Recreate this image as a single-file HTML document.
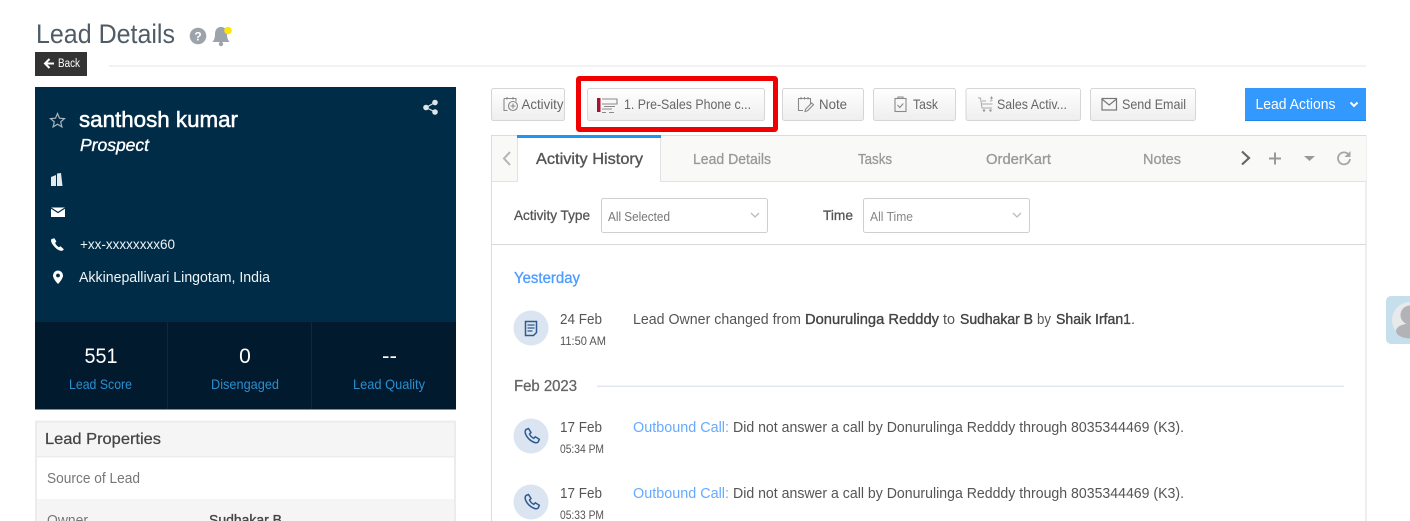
<!DOCTYPE html>
<html lang="en"><head><meta charset="utf-8"><title>Lead Details</title>
<style>
html,body{margin:0;padding:0;background:#fff;width:1410px;height:521px;overflow:hidden}
svg{display:block}
text{font-family:"Liberation Sans",sans-serif;white-space:pre}
.b{font-size:14px;fill:#666}
.tab{font-size:15px;fill:#999;stroke:#999;stroke-width:.3}
.row{font-size:14.5px;fill:#555}
.strong{font-size:14.5px;fill:#444;stroke:#444;stroke-width:.35}
.d{font-size:14.5px;fill:#555}
.t{font-size:11.5px;fill:#555}
.ic{fill:none;stroke:#8a8a8a;stroke-width:1.1}
.lnk{font-size:14.5px;fill:#66aaff}
</style></head><body>
<svg width="1410" height="521" viewBox="0 0 1410 521" xmlns="http://www.w3.org/2000/svg">
<defs><linearGradient id="g" x1="0" y1="0" x2="0" y2="1"><stop offset="0" stop-color="#fff"/><stop offset="1" stop-color="#eeeeee"/></linearGradient></defs>
<rect width="1410" height="521" fill="#fff"/>

<!-- header -->
<text x="36" y="43" font-size="26.500" fill="#4f5b66" textLength="139" lengthAdjust="spacingAndGlyphs">Lead Details</text>
<circle cx="198" cy="36" r="8.300" fill="#9ca3ab"/>
<text x="198" y="40.500" font-size="12" font-weight="bold" fill="#fff" text-anchor="middle">?</text>
<path d="M221 27c-4 0-6 3-6 7 0 4-1 6-2.500 8h17c-1.500-2-2.500-4-2.500-8 0-4-2-7-6-7z" fill="#9ca3ab"/>
<circle cx="221" cy="44" r="2.200" fill="#9ca3ab"/>
<circle cx="228" cy="30.500" r="3.800" fill="#ffe600"/>
<rect x="35" y="52" width="52" height="24" fill="#333"/>
<path d="M54 63.500h-8M49.500 59l-4.500 4.500 4.500 4.500" fill="none" stroke="#fff" stroke-width="2"/>
<text x="58" y="67" font-size="11.500" fill="#fff" textLength="22" lengthAdjust="spacingAndGlyphs">Back</text>
<rect x="109" y="65.500" width="1257" height="1" fill="#e3e5e8"/>

<!-- lead card -->
<rect x="35" y="87" width="421" height="235" fill="#012c47"/>
<rect x="35" y="322" width="421" height="87.500" fill="#021a2e"/>
<rect x="167" y="322" width="1" height="87" fill="#0a2a40"/>
<rect x="311" y="322" width="1" height="87" fill="#0a2a40"/>
<path d="M57.500 113.500l2 4.700 5 .4-3.800 3.300 1.200 5-4.400-2.700-4.400 2.700 1.200-5-3.800-3.300 5-.4z" fill="none" stroke="#a9b4bc" stroke-width="1.200"/>
<text x="79" y="127" font-size="22" fill="#fff" stroke="#fff" stroke-width=".5" textLength="159" lengthAdjust="spacingAndGlyphs">santhosh kumar</text>
<text x="80" y="151" font-size="17.500" font-style="italic" fill="#fff" stroke="#fff" stroke-width=".35" textLength="69" lengthAdjust="spacingAndGlyphs">Prospect</text>
<g fill="#dfe6ea"><circle cx="426" cy="107.500" r="2.800"/><circle cx="435" cy="102.500" r="2.800"/><circle cx="435" cy="112" r="2.800"/></g>
<path d="M426 107.500l9-5M426 107.500l9 4.500" stroke="#dfe6ea" stroke-width="1.200" fill="none"/>
<path d="M51 186v-9l5-2v11zM57 186v-12.500l4-.5 1.500 13z" fill="#e4e9ec"/>
<rect x="51" y="207.500" width="14" height="9.500" fill="#fff"/>
<path d="M51 208l7 4.500 7-4.500" fill="none" stroke="#012c47" stroke-width="1.200"/>
<path d="M51.500 239c-1 1.500-.3 3.500 1.500 6 1.700 2.300 4.500 5 7.500 5.700 1.700.3 2.800-.4 3.300-1.500l-3.300-3-1.700 1c-1.500-.9-3-2.600-3.700-4.200l1.300-1.500-2-3.300z" fill="#fff"/>
<path d="M58 270.500a5 5 0 0 0-5 5c0 3.500 5 8.500 5 8.500s5-5 5-8.500a5 5 0 0 0-5-5z" fill="#fff"/>
<circle cx="58" cy="275.500" r="1.900" fill="#012c47"/>
<text x="80" y="249" font-size="14" fill="#eef3f6" textLength="95" lengthAdjust="spacingAndGlyphs">+xx-xxxxxxxx60</text>
<text x="79" y="282" font-size="14.500" fill="#eef3f6" textLength="191" lengthAdjust="spacingAndGlyphs">Akkinepallivari Lingotam, India</text>
<text x="84.500" y="363" font-size="21" fill="#fff" textLength="33" lengthAdjust="spacingAndGlyphs">551</text>
<text x="245" y="363" font-size="21" fill="#fff" text-anchor="middle">0</text>
<text x="382" y="363" font-size="21" fill="#fff" textLength="15" lengthAdjust="spacingAndGlyphs">--</text>
<g font-size="14" fill="#2a8fd0">
<text x="69" y="389" textLength="63" lengthAdjust="spacingAndGlyphs">Lead Score</text>
<text x="211" y="389" textLength="68" lengthAdjust="spacingAndGlyphs">Disengaged</text>
<text x="353" y="389" textLength="72" lengthAdjust="spacingAndGlyphs">Lead Quality</text>
</g>

<!-- lead properties -->
<rect x="35" y="421" width="421" height="110" fill="#fff"/>
<rect x="36" y="422" width="419" height="34" fill="#f5f5f5"/>
<rect x="36" y="499" width="419" height="30" fill="#f5f5f5"/>
<path d="M36 532V421.500h419V532" fill="none" stroke="#ececec" stroke-width="2"/>
<rect x="36" y="456" width="419" height="1.500" fill="#ececec"/>
<text x="45" y="444" font-size="16" fill="#444" stroke="#444" stroke-width=".25" textLength="116" lengthAdjust="spacingAndGlyphs">Lead Properties</text>
<text x="47" y="483" font-size="14.500" fill="#777" textLength="93" lengthAdjust="spacingAndGlyphs">Source of Lead</text>
<text x="47" y="525" font-size="14.500" fill="#777" textLength="41" lengthAdjust="spacingAndGlyphs">Owner</text>
<text x="209" y="525" font-size="14.500" fill="#444" stroke="#444" stroke-width=".35" textLength="73" lengthAdjust="spacingAndGlyphs">Sudhakar B</text>

<!-- action buttons -->
<g fill="url(#g)" stroke="#d6d6d6">
<rect x="491.500" y="88.500" width="73" height="32" rx="2"/>
<rect x="587.500" y="88.500" width="177" height="32" rx="2"/>
<rect x="782.500" y="88.500" width="81" height="32" rx="2"/>
<rect x="873.500" y="88.500" width="82" height="32" rx="2"/>
<rect x="966" y="88.500" width="114.500" height="32" rx="2"/>
<rect x="1090.500" y="88.500" width="105" height="32" rx="2"/>
</g>
<!-- activity icon -->
<path class="ic" d="M504 98.500h12v3M504 98.500v12h3.500M507 97v2.500M513 97v2.500"/>
<circle class="ic" cx="513" cy="106" r="4.500"/>
<path class="ic" d="M513 103.500v5M510.500 106h5"/>
<text class="b" x="521.500" y="109" textLength="42" lengthAdjust="spacingAndGlyphs">Activity</text>
<!-- pre-sales icon -->
<rect x="597" y="98" width="3.500" height="14" fill="#a6122f"/>
<path class="ic" d="M602 99h15v5h-15M604 106.500h11M602 109h10M602 112.500h4M609 112.500h5" stroke="#aaa"/>
<text class="b" x="624" y="109" textLength="127" lengthAdjust="spacingAndGlyphs">1. Pre-Sales Phone c...</text>
<!-- note icon -->
<path class="ic" d="M799 110.500h-.5v-12h12v6M801 97v2.500M804.500 97v2.500M808 97v2.500M799 110.500h4"/>
<path class="ic" d="M805 111.500l.7-2.500 6-6 1.800 1.800-6 6z"/>
<text class="b" x="819" y="109" textLength="28" lengthAdjust="spacingAndGlyphs">Note</text>
<!-- task icon -->
<rect class="ic" x="895" y="98.500" width="11" height="13" />
<path class="ic" d="M898 98.500v-1.500h5v1.500M897.500 105l2.300 2.500 3.500-4"/>
<text class="b" x="913" y="109" textLength="25" lengthAdjust="spacingAndGlyphs">Task</text>
<!-- cart -->
<path d="M978 98h2.500l1.500 10h10M982 101h4M982 104h10.500M990 101l2.500-.5" fill="none" stroke="#aaa" stroke-width="1"/>
<circle cx="984" cy="110.500" r="1.200" fill="#999"/><circle cx="990.500" cy="110.500" r="1.200" fill="#999"/>
<path d="M990 98h3M991.500 96.500v3" stroke="#999" stroke-width="1"/>
<text class="b" x="997" y="109" textLength="70" lengthAdjust="spacingAndGlyphs">Sales Activ...</text>
<!-- mail -->
<rect x="1102" y="98.500" width="14.500" height="11.500" fill="none" stroke="#777" stroke-width="1.200"/>
<path d="M1102.500 99.500l6.700 5.500 6.700-5.500" fill="none" stroke="#777" stroke-width="1.200"/>
<text class="b" x="1122" y="109" textLength="64" lengthAdjust="spacingAndGlyphs">Send Email</text>
<rect x="1245" y="88" width="121" height="33" fill="#3399ff"/>
<rect x="1245" y="120" width="121" height="1" fill="#1c86ee"/>
<text x="1255.500" y="109" font-size="14.500" fill="#fff" textLength="80" lengthAdjust="spacingAndGlyphs">Lead Actions</text>
<path d="M1350.500 102.500l3.500 3.500 3.500-3.500" fill="none" stroke="#fff" stroke-width="2"/>

<!-- tabs panel -->
<rect x="491.500" y="135.500" width="874.500" height="400" fill="#fff" stroke="#dcdcdc"/>
<rect x="492" y="136" width="874" height="45" fill="#f9f9f7"/>
<rect x="492" y="181" width="874" height="1" fill="#e2e2e2"/>
<rect x="517" y="135" width="144" height="47" fill="#fff"/>
<rect x="517" y="138" width="1" height="44" fill="#e2e2e2"/>
<rect x="660" y="138" width="1" height="44" fill="#e2e2e2"/>
<rect x="517" y="135" width="144" height="3" fill="#1e96f0"/>
<path d="M510 152l-6 6.500 6 6.500" fill="none" stroke="#b5b5b5" stroke-width="2"/>
<text x="536" y="164" font-size="15.500" fill="#555" stroke="#555" stroke-width=".35" textLength="107" lengthAdjust="spacingAndGlyphs">Activity History</text>
<text class="tab" x="693" y="164" textLength="78" lengthAdjust="spacingAndGlyphs">Lead Details</text>
<text class="tab" x="858" y="164" textLength="34" lengthAdjust="spacingAndGlyphs">Tasks</text>
<text class="tab" x="986" y="164" textLength="65" lengthAdjust="spacingAndGlyphs">OrderKart</text>
<text class="tab" x="1143" y="164" textLength="38" lengthAdjust="spacingAndGlyphs">Notes</text>
<path d="M1242 151.500l7 6.500-7 6.500" fill="none" stroke="#666" stroke-width="2.200"/>
<path d="M1275 152.500v12M1269 158.500h12" stroke="#999" stroke-width="2" fill="none"/>
<path d="M1304 156h11l-5.500 5z" fill="#999"/>
<path d="M1349 155a6 6 0 1 0 1 4" fill="none" stroke="#a5a5a5" stroke-width="1.800"/>
<path d="M1350.500 151v6h-6z" fill="#a5a5a5"/>

<!-- filters -->
<text x="514" y="220" font-size="14" fill="#555" stroke="#555" stroke-width=".3" textLength="76" lengthAdjust="spacingAndGlyphs">Activity Type</text>
<rect x="601.500" y="198.500" width="166" height="34" rx="2" fill="#fff" stroke="#cfcfcf"/>
<text x="608" y="221" font-size="12.500" fill="#777" textLength="62" lengthAdjust="spacingAndGlyphs">All Selected</text>
<path d="M751 213l4 4 4-4" fill="none" stroke="#bbb" stroke-width="1.300"/>
<text x="823" y="220" font-size="14" fill="#555" stroke="#555" stroke-width=".3" textLength="30" lengthAdjust="spacingAndGlyphs">Time</text>
<rect x="863.500" y="198.500" width="166" height="34" rx="2" fill="#fff" stroke="#cfcfcf"/>
<text x="870" y="221" font-size="12.500" fill="#888" textLength="43" lengthAdjust="spacingAndGlyphs">All Time</text>
<path d="M1013 213l4 4 4-4" fill="none" stroke="#bbb" stroke-width="1.300"/>
<rect x="492" y="244" width="874" height="1" fill="#d9d9d9"/>

<!-- timeline -->
<text x="514" y="283" font-size="15.500" fill="#4d9cff" stroke="#4d9cff" stroke-width=".3" textLength="66" lengthAdjust="spacingAndGlyphs">Yesterday</text>
<circle cx="531" cy="328" r="17.500" fill="#dbe4f1"/>
<path d="M525.500 321.500h11v11l-3 3h-8z" fill="none" stroke="#2f5a8f" stroke-width="1.500"/>
<path d="M527.500 325h7M527.500 328h7M527.500 331h5" stroke="#2f5a8f" stroke-width="1.300"/>
<text class="d" x="560" y="324" textLength="42" lengthAdjust="spacingAndGlyphs">24 Feb</text>
<text class="t" x="560" y="345" textLength="46" lengthAdjust="spacingAndGlyphs">11:50 AM</text>
<text class="row" x="633" y="324" textLength="168" lengthAdjust="spacingAndGlyphs">Lead Owner changed from</text>
<text class="strong" x="805" y="324" textLength="134" lengthAdjust="spacingAndGlyphs">Donurulinga Redddy</text>
<text class="row" x="943" y="324" textLength="12" lengthAdjust="spacingAndGlyphs">to</text>
<text class="strong" x="960" y="324" textLength="73" lengthAdjust="spacingAndGlyphs">Sudhakar B</text>
<text class="row" x="1037" y="324" textLength="14" lengthAdjust="spacingAndGlyphs">by</text>
<text class="strong" x="1056" y="324" textLength="75" lengthAdjust="spacingAndGlyphs">Shaik Irfan1</text>
<text class="row" x="1131" y="324">.</text>

<text x="514" y="391" font-size="15.500" fill="#666" stroke="#666" stroke-width=".3" textLength="63" lengthAdjust="spacingAndGlyphs">Feb 2023</text>
<rect x="597" y="385.500" width="747" height="1.500" fill="#e2e7ef"/>

<circle cx="531" cy="436" r="17.500" fill="#dbe4f1"/>
<path d="M526 429.500l2.500-1 2.500 4-1.500 1.500c.8 1.800 2.500 3.500 4.300 4.300l1.500-1.500 4 2.500-1 2.500c-.8 1-2 1.200-3.300.8-4.500-1.300-8.300-5-9.700-9.500-.3-1.500 0-2.800.7-3.600z" fill="none" stroke="#2f5a8f" stroke-width="1.500"/>
<text class="d" x="560" y="432" textLength="42" lengthAdjust="spacingAndGlyphs">17 Feb</text>
<text class="t" x="560" y="453" textLength="44" lengthAdjust="spacingAndGlyphs">05:34 PM</text>
<text class="lnk" x="633" y="432" textLength="96" lengthAdjust="spacingAndGlyphs">Outbound Call:</text>
<text class="row" x="733" y="432" textLength="451" lengthAdjust="spacingAndGlyphs">Did not answer a call by Donurulinga Redddy through 8035344469 (K3).</text>

<circle cx="531" cy="502" r="17.500" fill="#dbe4f1"/>
<path d="M526 495.500l2.500-1 2.500 4-1.500 1.500c.8 1.800 2.500 3.500 4.300 4.300l1.500-1.500 4 2.500-1 2.500c-.8 1-2 1.200-3.300.8-4.500-1.300-8.300-5-9.700-9.500-.3-1.500 0-2.800.7-3.600z" fill="none" stroke="#2f5a8f" stroke-width="1.500"/>
<text class="d" x="560" y="498" textLength="42" lengthAdjust="spacingAndGlyphs">17 Feb</text>
<text class="t" x="560" y="519" textLength="44" lengthAdjust="spacingAndGlyphs">05:33 PM</text>
<text class="lnk" x="633" y="498" textLength="96" lengthAdjust="spacingAndGlyphs">Outbound Call:</text>
<text class="row" x="733" y="498" textLength="451" lengthAdjust="spacingAndGlyphs">Did not answer a call by Donurulinga Redddy through 8035344469 (K3).</text>

<!-- red highlight -->
<rect x="578.500" y="78.500" width="197" height="51" fill="none" stroke="#f00000" stroke-width="5" rx="1"/>

<!-- floating widget -->
<rect x="1386" y="296" width="40" height="48" rx="5" fill="#c5e0ec"/>
<circle cx="1410" cy="320" r="18" fill="#e8e9eb"/>
<circle cx="1410" cy="315" r="9.500" fill="#b2b3b6"/>
<ellipse cx="1410" cy="331" rx="14" ry="7.500" fill="#b2b3b6"/>
</svg>
</body></html>
